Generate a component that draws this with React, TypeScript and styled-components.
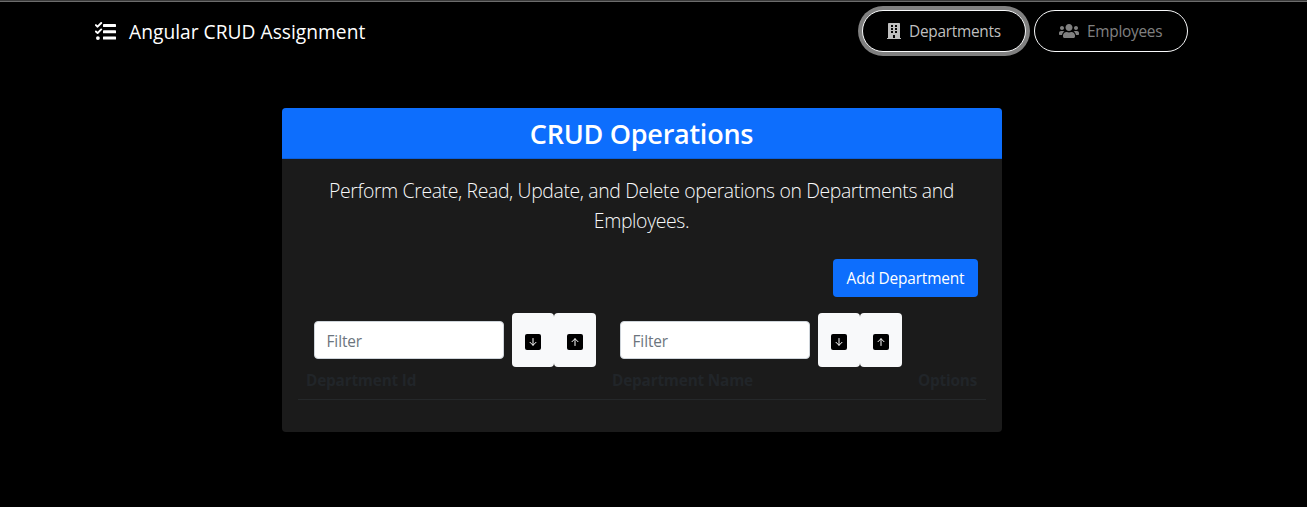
import React from "react";
import styled, { createGlobalStyle } from "styled-components";
import { FaBuilding, FaUsers } from "react-icons/fa";

const GlobalStyle = createGlobalStyle`
  *, *::before, *::after { box-sizing: border-box; }
  body {
    margin: 0;
    background: #000;
    color: #212529;
    font-family: "Segoe UI", "Open Sans", "Noto Sans", sans-serif;
    font-size: 15.4px;
    line-height: 24px;
  }
  button, input { font: inherit; margin: 0; }
`;

const Page = styled.div`
  height: 507px;
  overflow: hidden;
  border-top: 1px solid #3a3a3a;
`;

const Navbar = styled.nav`
  display: flex;
  justify-content: space-between;
  align-items: flex-start;
  height: 107px;
  padding: 8px 119px 0 95px;
  border-top: 1px solid #6c6c6c;
`;

const Brand = styled.a`
  display: flex;
  align-items: center;
  gap: 13px;
  height: 42px;
  color: #fff;
  font-size: 19.2px;
  letter-spacing: 0.02px;
  white-space: nowrap;
`;

const BrandName = styled.span`
  padding-top: 2px;
`;

const NavList = styled.div`
  display: flex;
  gap: 8px;
`;

const NavPill = styled.button<{ $active?: boolean; $width: number }>`
  display: flex;
  align-items: center;
  width: ${(p) => p.$width}px;
  height: 42px;
  padding: 0 0 0 24px;
  border: 1px solid #f8f9fa;
  border-radius: 21px;
  background: #000;
  color: ${(p) => (p.$active ? "#bfbfbf" : "#808080")};
  box-shadow: ${(p) => (p.$active ? "0 0 0 4px #808080" : "none")};
  letter-spacing: -0.27px;
  white-space: nowrap;
`;

const PillIcon = styled.span<{ $width: number }>`
  display: flex;
  justify-content: center;
  width: ${(p) => p.$width}px;
  margin-right: 8px;
`;

const PillLabel = styled.span`
  padding-top: 2px;
`;

const Card = styled.main`
  width: 720px;
  height: 324px;
  margin-left: 282px;
  border-radius: 4px;
  overflow: hidden;
  background: #1b1b1b;
`;

const CardHeader = styled.h1`
  height: 51px;
  margin: 0;
  padding-right: 1px;
  border-bottom: 1px solid #0b5fdc;
  background: #0d6efd;
  color: #fff;
  font-size: 27px;
  font-weight: 600;
  line-height: 51px;
  letter-spacing: -0.25px;
  text-align: center;
`;

const CardBody = styled.div`
  padding: 17px 16px 0;
`;

const Lead = styled.p`
  margin: 0;
  padding-right: 1px;
  color: #f8f9fa;
  font-size: 19.4px;
  font-weight: 300;
  line-height: 30px;
  letter-spacing: -0.36px;
  text-align: center;
  white-space: nowrap;
`;

const Actions = styled.div`
  display: flex;
  justify-content: flex-end;
  padding: 23px 8px 16px 0;
`;

const AddButton = styled.button`
  width: 145px;
  height: 38px;
  padding: 2px 0 0;
  border: 0;
  border-radius: 4px;
  background: #0d6efd;
  color: #fff;
  letter-spacing: -0.15px;
  white-space: nowrap;
`;

const Table = styled.div`
  display: grid;
  grid-template-columns: 306px 306px 1fr;
  height: 87px;
  border-bottom: 1px solid #25282a;
`;

const HeadCell = styled.div`
  display: flex;
  flex-direction: column;
  justify-content: space-between;
  padding: 0 0 6px 8px;
`;

const FilterRow = styled.div`
  display: flex;
  align-items: center;
  height: 54px;
  padding-left: 8px;
`;

const FilterInput = styled.input`
  width: 190px;
  height: 38px;
  margin-right: 8px;
  padding: 2px 12px 0 11.5px;
  border: 1px solid #ced4da;
  border-radius: 4px;
  background: #fff;
  letter-spacing: -0.1px;
  &::placeholder { color: #6c757d; opacity: 1; }
`;

const SortButton = styled.button`
  display: flex;
  align-items: center;
  justify-content: center;
  width: 42px;
  height: 54px;
  padding: 4px 0 0;
  border: 0;
  border-radius: 4px;
  background: #f8f9fa;
`;

const ColumnTitle = styled.div`
  margin-top: auto;
  color: #212529;
  font-weight: 700;
  letter-spacing: -0.22px;
  white-space: nowrap;
`;

function TaskListIcon() {
  return (
    <svg width="21" height="20" viewBox="0 0 21 20">
      <g fill="#fff">
        <rect x="8" y="3" width="13" height="3" rx="0.4" />
        <rect x="8" y="9.3" width="13" height="3" rx="0.4" />
        <rect x="8" y="15.6" width="13" height="3" rx="0.4" />
        <circle cx="2.9" cy="17.1" r="1.9" />
      </g>
      <path
        d="M0.9 4.1l1.7 1.6L6.2 2M0.9 10.5l1.7 1.6L6.2 8.4"
        fill="none"
        stroke="#fff"
        strokeWidth="1.9"
        strokeLinecap="round"
        strokeLinejoin="round"
      />
    </svg>
  );
}

function ArrowSquare({ up }: { up?: boolean }) {
  return (
    <svg width="16" height="16" viewBox="0 0 16 16">
      <rect width="16" height="16" rx="2" fill="#000" />
      <path
        d={up ? "M8 11.5V4.8M5 7.7l3-3 3 3" : "M8 4.5v6.7M5 8.3l3 3 3-3"}
        fill="none"
        stroke="#fff"
        strokeWidth="1"
        strokeLinecap="round"
        strokeLinejoin="round"
      />
    </svg>
  );
}

function FilterColumn({ title }: { title: string }) {
  return (
    <HeadCell>
      <FilterRow>
        <FilterInput placeholder="Filter" />
        <SortButton aria-label="Sort descending"><ArrowSquare /></SortButton>
        <SortButton aria-label="Sort ascending"><ArrowSquare up /></SortButton>
      </FilterRow>
      <ColumnTitle>{title}</ColumnTitle>
    </HeadCell>
  );
}

export default function App() {
  return (
    <Page>
      <GlobalStyle />
      <Navbar>
        <Brand>
          <TaskListIcon />
          <BrandName>Angular CRUD Assignment</BrandName>
        </Brand>
        <NavList>
          <NavPill $active $width={164}>
            <PillIcon $width={14}><FaBuilding size={16} /></PillIcon>
            <PillLabel>Departments</PillLabel>
          </NavPill>
          <NavPill $width={154}>
            <PillIcon $width={20}><FaUsers size={20} /></PillIcon>
            <PillLabel>Employees</PillLabel>
          </NavPill>
        </NavList>
      </Navbar>
      <Card>
        <CardHeader>CRUD Operations</CardHeader>
        <CardBody>
          <Lead>
            Perform Create, Read, Update, and Delete operations on Departments and
            <br />
            Employees.
          </Lead>
          <Actions>
            <AddButton>Add Department</AddButton>
          </Actions>
          <Table>
            <FilterColumn title="Department Id" />
            <FilterColumn title="Department Name" />
            <HeadCell>
              <ColumnTitle>Options</ColumnTitle>
            </HeadCell>
          </Table>
        </CardBody>
      </Card>
    </Page>
  );
}
